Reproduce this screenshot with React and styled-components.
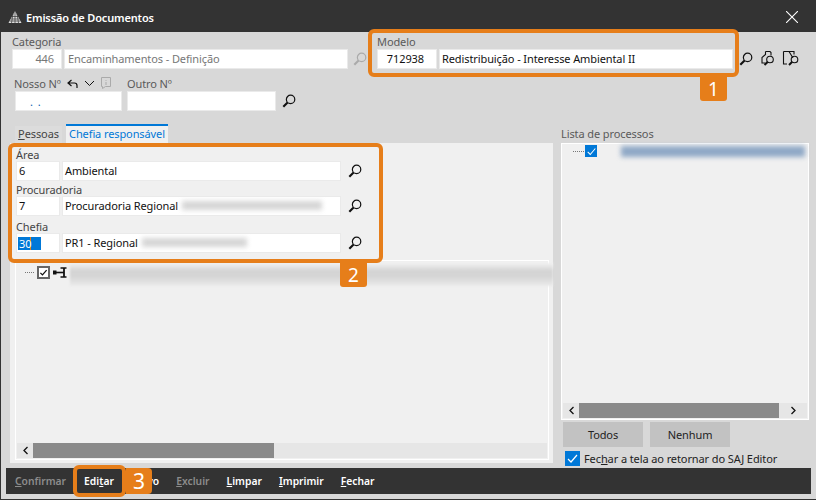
import React from 'react';
import styled, { createGlobalStyle } from 'styled-components';

const orange = '#e67e1a';
const dark = '#333333';

const Global = createGlobalStyle`
  html, body { margin: 0; padding: 0; background: ${dark}; }
  body { font-family: "Noto Sans", "Open Sans", sans-serif; font-size: 11px; letter-spacing: -.1px; color: #111; }
`;

const Frame = styled.div`
  position: relative;
  width: 816px;
  height: 500px;
  overflow: hidden;
  background: ${dark};
  display: flex;
  flex-direction: column;
`;
const TitleBar = styled.div`
  box-sizing: border-box;
  height: 32px;
  flex: none;
  display: flex;
  align-items: center;
  padding: 2px 18px 0 8px;
  gap: 4px;
  color: #fff;
  font-weight: 600;
  font-size: 11px;
  letter-spacing: -.15px;
`;
const TitleText = styled.span`
  flex: 1;
`;
const Body = styled.div`
  flex: 1;
  margin: 0 0 1px 1px;
  padding-bottom: 5px;
  background: #d8d8d8;
  display: flex;
  flex-direction: column;
  min-height: 0;
`;
const Content = styled.div`
  flex: 1;
  display: grid;
  grid-template-columns: 552px 1fr;
  grid-template-rows: 92px 1fr;
  min-height: 0;
`;
const TopArea = styled.div`
  grid-column: 1 / 3;
  display: flex;
  flex-direction: column;
`;
const TopRow = styled.div`
  display: flex;
  height: 42px;
  padding: 2px 0 0 11px;
`;
const SecondRow = styled.div`
  display: flex;
  padding-left: 14px;
`;
const Field = styled.div`
  display: flex;
  flex-direction: column;
  width: ${p => p.$w}px;
  margin-left: ${p => p.$ml || 0}px;
`;
const LabelRow = styled.div`
  display: flex;
  align-items: center;
  height: 15px;
  gap: 6px;
  margin-left: -1px;
`;
const Label = styled.label`
  color: ${p => p.$c || '#5a5a5a'};
  font-size: 11px;
  line-height: 15px;
  height: 15px;
  white-space: nowrap;
`;
const ChiefLabel = styled(Label)`
  color: #444;
  line-height: 17px;
`;
const InputRow = styled.div`
  display: flex;
  align-items: center;
  gap: 2px;
`;
const Input = styled.div`
  box-sizing: border-box;
  width: ${p => p.$w}px;
  height: 20px;
  background: #fff;
  border: 1px solid #eaeaea;
  color: ${p => (p.$off ? '#777' : '#111')};
  padding: ${p => p.$pad || '0 3px 2px'};
  font-size: 11px;
  line-height: 15px;
  white-space: nowrap;
  overflow: hidden;
  flex: none;
  display: flex;
  align-items: center;
  justify-content: ${p => (p.$align === 'right' ? 'flex-end' : 'flex-start')};
`;
const DotsValue = styled.span`
  color: #0a5fb0;
  letter-spacing: 1px;
`;
const Selected = styled.span`
  display: inline-block;
  width: 23px;
  height: 13px;
  line-height: 13px;
  margin-top: 2px;
  padding-left: 1px;
  box-sizing: border-box;
  background: linear-gradient(90deg, #0078d7 12px, ${orange} 12px, ${orange} 13px, #0078d7 13px);
  color: #fff;
`;
const Blur = styled.span`
  display: inline-block;
  height: ${p => p.$h || 10}px;
  width: ${p => p.$w}px;
  margin-left: ${p => p.$ml || 0}px;
  background: ${p => p.$c || '#cfcfcf'};
  filter: blur(2.5px);
  flex: none;
`;
const BlurBand = styled.span`
  display: inline-block;
  height: 23px;
  width: 483px;
  margin-top: 4px;
  background: linear-gradient(#f2f2f2, #d4d4d4 35%, #d6d6d6 60%, #ebebeb);
  filter: blur(1px);
  flex: none;
`;
const IconBtn = styled.span`
  display: inline-flex;
  width: ${p => p.$w || 20}px;
  justify-content: center;
  align-items: center;
  flex: none;
  margin-left: ${p => p.$ml || 0}px;
  opacity: ${p => (p.$off ? 0.3 : 1)};
`;
const LeftCol = styled.div`
  display: flex;
  flex-direction: column;
  padding-left: 9px;
  min-height: 0;
`;
const Tabs = styled.div`
  display: flex;
  height: 19px;
  margin-left: 5px;
  gap: 4px;
  align-items: flex-end;
`;
const Tab = styled.div`
  box-sizing: border-box;
  width: ${p => p.$w}px;
  height: ${p => (p.$active ? 19 : 17)}px;
  text-align: center;
  font-size: 11px;
  line-height: 16px;
  background: ${p => (p.$active ? '#f0f0f0' : '#dcdcdc')};
  color: ${p => (p.$active ? '#0078d7' : '#444')};
  border-top: ${p => (p.$active ? '2px solid #0078d7' : 'none')};
`;
const TabPanel = styled.div`
  width: 543px;
  height: 320px;
  box-sizing: border-box;
  background: #f0f0f0;
  padding: 3px 4px 3px 5px;
  display: flex;
  flex-direction: column;
`;
const ChiefField = styled.div`
  display: flex;
  flex-direction: column;
  height: ${p => p.$h}px;
  margin-left: 1px;
`;
const TreeBox = styled.div`
  flex: 1;
  margin-top: 7px;
  border: 1px solid #fff;
  display: flex;
  flex-direction: column;
  min-height: 0;
`;
const TreeBody = styled.div`
  flex: 1;
  display: flex;
  flex-direction: column;
  padding-top: ${p => p.$pt || 0}px;
`;
const TreeRow = styled.div`
  display: flex;
  align-items: center;
  height: ${p => p.$h}px;
  padding-left: ${p => p.$pl}px;
`;
const Dots = styled.span`
  width: ${p => p.$w}px;
  border-top: 1px dotted #777;
  margin-right: ${p => p.$mr}px;
  flex: none;
`;
const TreeCheck = styled.span`
  box-sizing: border-box;
  width: 13px;
  height: 13px;
  border: 2px solid #666;
  background: #fff;
  display: inline-flex;
  align-items: center;
  justify-content: center;
  flex: none;
`;
const BlueCheck = styled.span`
  box-sizing: border-box;
  width: ${p => p.$s}px;
  height: ${p => p.$s}px;
  background: #0078d7;
  display: inline-flex;
  align-items: center;
  justify-content: center;
  flex: none;
`;
const ScrollBar = styled.div`
  height: 15px;
  flex: none;
  background: #e6e6e6;
  display: flex;
  align-items: center;
  margin: 0 1px 1px;
`;
const Arrow = styled.span`
  width: ${p => p.$w}px;
  display: inline-flex;
  justify-content: center;
  flex: none;
`;
const Thumb = styled.div`
  height: 15px;
  width: ${p => p.$w}px;
  background: #8a8a8a;
  flex: none;
`;
const Spacer = styled.div`
  flex: 1;
`;
const RightCol = styled.div`
  display: flex;
  flex-direction: column;
  padding-left: 8px;
  min-height: 0;
`;
const ListLabel = styled(Label)`
  margin-top: 1px;
  height: 18px;
  line-height: 17px;
`;
const ListBox = styled.div`
  box-sizing: border-box;
  width: 248px;
  height: 277px;
  background: #f0f0f0;
  border: 1px solid #fff;
  display: flex;
  flex-direction: column;
`;
const Buttons = styled.div`
  display: flex;
  gap: 7px;
  margin: 2px 0 0 2px;
`;
const Button = styled.div`
  width: 80px;
  height: 25px;
  background: #c2c2c2;
  display: flex;
  align-items: center;
  justify-content: center;
  font-size: 11px;
  color: #222;
`;
const CheckRow = styled.div`
  display: flex;
  align-items: center;
  gap: 4px;
  margin: 4px 0 0 4px;
  font-size: 11px;
  color: #222;
`;
const Footer = styled.div`
  flex: none;
  height: 26px;
  margin: 0 5px;
  background: ${dark};
  display: flex;
  align-items: center;
  padding-left: 9px;
`;
const FootBtn = styled.span`
  color: ${p => (p.$off ? '#8c8c8c' : '#fff')};
  font-weight: 600;
  font-size: 10.3px;
  letter-spacing: 0;
  margin-right: ${p => p.$mr}px;
`;
const U = styled.span`
  text-decoration: underline;
`;
const Callout = styled.div`
  position: absolute;
  left: ${p => p.$x}px;
  top: ${p => p.$y}px;
  width: ${p => p.$w}px;
  height: ${p => p.$h}px;
  box-sizing: border-box;
  border: 4px solid ${orange};
  border-radius: 6px;
  pointer-events: none;
`;
const Badge = styled.div`
  position: absolute;
  left: ${p => p.$x}px;
  top: ${p => p.$y}px;
  width: ${p => p.$w || 27}px;
  height: ${p => p.$h || 24}px;
  background: ${orange};
  border-radius: ${p => p.$r || '0 0 3px 3px'};
  color: #fff;
  font-size: ${p => p.$fs || 19}px;
  line-height: ${p => p.$h || 24}px;
  text-align: center;
  letter-spacing: 0;
`;

const Search = ({ c = '#111', s = 14 }) => (
  <svg width={s} height={s} viewBox="0 0 16 16" fill="none" stroke={c}>
    <circle cx="9.800" cy="6.200" r="4.800" strokeWidth="1.400" />
    <path d="M6.400 9.600 1.500 14.500" strokeWidth="2.400" />
  </svg>
);

const DocSearch = ({ variant }) => (
  <svg width="18" height="18" viewBox="0 0 18 18" fill="none" stroke="#111">
    {variant === 1 ? (
      <path d="M6.500 1.500h4.500l1 1v3M6.500 1.500v3l-3.500 3v5.500h3.500" strokeWidth="1.100" />
    ) : (
      <path d="M1.500 1.500h10.500v3M7 1.500l4 6.500M1.500 1.500v12.500h3.500" strokeWidth="1.100" />
    )}
    <circle cx={variant === 1 ? 11 : 12.500} cy="9.500" r="3.300" strokeWidth="1.100" />
    <path d={variant === 1 ? 'M8.600 12 5.500 15' : 'M10 12 7 15'} strokeWidth="2" />
  </svg>
);

const Tick = ({ s = 13, c = '#fff', w = 1.200 }) => (
  <svg width={s} height={s} viewBox="0 0 13 13" fill="none" stroke={c} strokeWidth={w}>
    <path d="M2 7l3 3 6-7" />
  </svg>
);

const Logo = () => (
  <svg width="14" height="14" viewBox="0 0 14 14" fill="#ddd">
    <path d="M7 1 13.500 13H.5z" />
    <path d="M4 6.500h6M3 9h8M2 11h10M7 1v12M5 4 3.500 13M9 4l1.500 9" stroke={dark} strokeWidth=".7" />
  </svg>
);

const Close = () => (
  <svg width="12" height="12" viewBox="0 0 12 12" stroke="#fff" strokeWidth="1.100">
    <path d="M0 0 12 12M12 0 0 12" />
  </svg>
);

const Chevron = ({ dir }) => (
  <svg width="7" height="9" viewBox="0 0 7 9" fill="none" stroke="#111" strokeWidth="1.300">
    <path d={dir === 'left' ? 'M5.500 1 2 4.500 5.500 8' : 'M1.500 1 5 4.500 1.500 8'} />
  </svg>
);

const BackArrow = () => (
  <svg width="11" height="10" viewBox="0 0 11 10" fill="none" stroke="#111" strokeWidth="1.200">
    <path d="M4.500 1 1 4 4.500 7M1 4h6.500q2.500 0 2.500 2.500v2.500" />
  </svg>
);

const Caret = () => (
  <svg width="11" height="7" viewBox="0 0 11 7" fill="none" stroke="#111" strokeWidth="1">
    <path d="M1 1l4.500 4.500L10 1" />
  </svg>
);

const NoteIcon = () => (
  <svg width="10" height="13" viewBox="0 0 10 13" fill="none" stroke="#aaa" strokeWidth="1">
    <path d="M.5.500h9v9h-5l-3 2v-2h-1zM5 3v.800M5 5v3" />
  </svg>
);

const KeyIcon = () => (
  <svg width="14" height="11" viewBox="0 0 14 11" fill="none" stroke="#111">
    <path d="M2 5.500h9" strokeWidth="1.600" />
    <path d="M11 1v9" strokeWidth="1.800" />
    <path d="M7.500 1h6M7.500 10h6" strokeWidth="1.400" />
    <rect x="0" y="3.500" width="3.500" height="4" fill="#111" stroke="none" />
  </svg>
);

const chiefFields = [
  { label: 'Área', code: '6', name: 'Ambiental', h: 35 },
  { label: 'Procuradoria', code: '7', name: 'Procuradoria Regional', blur: 140, h: 37 },
  { label: 'Chefia', code: '30', name: 'PR1 - Regional', blur: 105, h: 35, selected: true },
];

const footerItems = [
  { pre: '', u: 'C', post: 'onfirmar', off: true, mr: 18 },
  { pre: 'Edi', u: 't', post: 'ar', mr: 19 },
  { pre: '', u: 'N', post: 'ovo', mr: 17 },
  { pre: '', u: 'E', post: 'xcluir', off: true, mr: 17 },
  { pre: '', u: 'L', post: 'impar', mr: 17 },
  { pre: '', u: 'I', post: 'mprimir', mr: 17 },
  { pre: '', u: 'F', post: 'echar', mr: 0 },
];

export default function App() {
  return (
    <Frame>
      <Global />
      <TitleBar>
        <Logo />
        <TitleText>Emissão de Documentos</TitleText>
        <Close />
      </TitleBar>
      <Body>
        <Content>
          <TopArea>
            <TopRow>
              <Field $w={350}>
                <Label>Categoria</Label>
                <InputRow>
                  <Input $w={50} $align="right" $off $pad="0 7px 2px 0">446</Input>
                  <Input $w={284} $off>Encaminhamentos - Definição</Input>
                  <IconBtn $off><Search c="#444" /></IconBtn>
                </InputRow>
              </Field>
              <Field $w={430} $ml={15}>
                <Label>Modelo</Label>
                <InputRow>
                  <Input $w={60} $align="right" $pad="0 12px 2px 0">712938</Input>
                  <Input $w={294} $pad="0 2px 2px">Redistribuição - Interesse Ambiental II</Input>
                  <IconBtn $ml={1}><Search /></IconBtn>
                  <IconBtn><DocSearch variant={1} /></IconBtn>
                  <IconBtn $ml={1}><DocSearch variant={2} /></IconBtn>
                </InputRow>
              </Field>
            </TopRow>
            <SecondRow>
              <Field $w={107}>
                <LabelRow>
                  <Label>Nosso Nº</Label>
                  <BackArrow />
                  <Caret />
                  <NoteIcon />
                </LabelRow>
                <InputRow>
                  <Input $w={107} $pad="0 0 0 14px"><DotsValue>. .</DotsValue></Input>
                </InputRow>
              </Field>
              <Field $w={170} $ml={5}>
                <Label>Outro Nº</Label>
                <InputRow>
                  <Input $w={149}></Input>
                  <IconBtn $ml={1}><Search /></IconBtn>
                </InputRow>
              </Field>
            </SecondRow>
          </TopArea>
          <LeftCol>
            <Tabs>
              <Tab $w={47}><U>P</U>essoas</Tab>
              <Tab $w={102} $active>Chefia responsável</Tab>
            </Tabs>
            <TabPanel>
              {chiefFields.map(f => (
                <ChiefField key={f.label} $h={f.h}>
                  <ChiefLabel>{f.label}</ChiefLabel>
                  <InputRow>
                    <Input $w={44} $pad={f.selected ? '0 1px 2px' : '0 2px 2px'}>
                      {f.selected ? <Selected>{f.code}</Selected> : f.code}
                    </Input>
                    <Input $w={279} $pad="0 1px 2px 2px">
                      {f.name}
                      {f.blur && <Blur $w={f.blur} $h={9} $ml={4} $c="#d6d6d6" />}
                    </Input>
                    <IconBtn $ml={2}><Search /></IconBtn>
                  </InputRow>
                </ChiefField>
              ))}
              <TreeBox>
                <TreeBody $pt={3}>
                  <TreeRow $pl={9} $h={16}>
                    <Dots $w={9} $mr={3} />
                    <TreeCheck><Tick s={9} c="#111" w={1.800} /></TreeCheck>
                    <IconBtn><KeyIcon /></IconBtn>
                    <BlurBand />
                  </TreeRow>
                </TreeBody>
                <ScrollBar>
                  <Arrow $w={16}><Chevron dir="left" /></Arrow>
                  <Thumb $w={241} />
                  <Spacer />
                </ScrollBar>
              </TreeBox>
            </TabPanel>
          </LeftCol>
          <RightCol>
            <ListLabel>Lista de processos</ListLabel>
            <ListBox>
              <TreeBody>
                <TreeRow $pl={11} $h={14}>
                  <Dots $w={11} $mr={1} />
                  <BlueCheck $s={12}><Tick s={11} /></BlueCheck>
                  <Blur $w={184} $h={11} $ml={24} $c="#8fa8c6" />
                </TreeRow>
              </TreeBody>
              <ScrollBar>
                <Arrow $w={16}><Chevron dir="left" /></Arrow>
                <Thumb $w={200} />
                <Spacer />
                <Arrow $w={28}><Chevron dir="right" /></Arrow>
              </ScrollBar>
            </ListBox>
            <Buttons>
              <Button>Todos</Button>
              <Button>Nenhum</Button>
            </Buttons>
            <CheckRow>
              <BlueCheck $s={15}><Tick s={13} /></BlueCheck>
              <span>Fec<U>h</U>ar a tela ao retornar do SAJ Editor</span>
            </CheckRow>
          </RightCol>
        </Content>
        <Footer>
          {footerItems.map(i => (
            <FootBtn key={i.post} $off={i.off} $mr={i.mr}>
              {i.pre}<U>{i.u}</U>{i.post}
            </FootBtn>
          ))}
        </Footer>
      </Body>
      <Callout $x={368} $y={29} $w={371} $h={48} />
      <Badge $x={700} $y={77}>1</Badge>
      <Callout $x={8} $y={143} $w={375} $h={120} />
      <Badge $x={340} $y={263}>2</Badge>
      <Callout $x={73} $y={465} $w={53} $h={32} />
      <Badge $x={126} $y={468} $w={26} $h={26} $r="0 4px 4px 0" $fs={21}>3</Badge>
    </Frame>
  );
}
